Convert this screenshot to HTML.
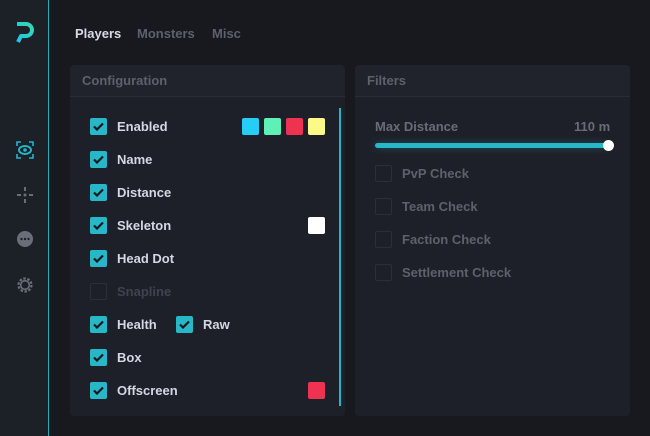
<!DOCTYPE html><html><head><style>
*{margin:0;padding:0;box-sizing:border-box}
body{width:650px;height:436px;background:#17191e;font-family:"Liberation Sans",sans-serif;font-weight:bold;position:relative;overflow:hidden}
.side{position:absolute;left:0;top:0;width:49px;height:436px;background:#1c2027;border-right:1px solid #2aa9bd}
.tab{position:absolute;top:26px;font-size:13px;color:#5d616c}
.panel{position:absolute;top:65px;height:351px;background:#1e2029;border-radius:4px}
.ph{height:32px;border-bottom:1px solid #2a2d36;color:#5d616c;font-size:13px;padding:8px 0 0 12px;background:#20232b;border-radius:4px 4px 0 0}
.row{position:absolute;height:16px;font-size:13px;color:#d4d7e4;line-height:18px}
.cb{position:absolute;left:0;top:0;width:17px;height:17px;border-radius:2px;background:#27b7c8}
.cb svg{position:absolute;left:3px;top:4px}
.cb.off{background:transparent;border:1px solid #2c2f38}
.lbl{position:absolute;left:27px;top:0;white-space:nowrap}
.sw{position:absolute;width:17px;height:17px;border-radius:2px}
</style></head><body>
<div class="side">
<svg style="position:absolute;left:14px;top:21px" width="22" height="24" viewBox="0 0 22 24"><defs><linearGradient id="g" x1="0" y1="1" x2="1" y2="0"><stop offset="0" stop-color="#20c2e8"/><stop offset="1" stop-color="#38d8b0"/></linearGradient></defs><path d="M3 3 H12 A6 6 0 0 1 12 15 H7 L4 21" fill="none" stroke="url(#g)" stroke-width="4" stroke-linejoin="round"/></svg>
<svg style="position:absolute;left:16px;top:141px" width="18" height="18" viewBox="0 0 18 18"><path d="M1 5V1H5M13 1H17V5M17 13V17H13M5 17H1V13" fill="none" stroke="#25b5c8" stroke-width="1.6"/><ellipse cx="9" cy="9" rx="6" ry="4" fill="none" stroke="#25b5c8" stroke-width="2"/><circle cx="9" cy="9" r="1.8" fill="#25b5c8"/></svg>
<svg style="position:absolute;left:16px;top:186px" width="18" height="18" viewBox="0 0 18 18" fill="#6a6e78"><rect x="8" y="1" width="2" height="4"/><rect x="8" y="13" width="2" height="4"/><rect x="1" y="8" width="4" height="2"/><rect x="13" y="8" width="4" height="2"/><circle cx="9" cy="9" r="1.5"/></svg>
<svg style="position:absolute;left:17px;top:231px" width="16" height="16" viewBox="0 0 16 16"><circle cx="8" cy="8" r="8" fill="#6a6e78"/><circle cx="4.5" cy="8" r="1.2" fill="#1c2027"/><circle cx="8" cy="8" r="1.2" fill="#1c2027"/><circle cx="11.5" cy="8" r="1.2" fill="#1c2027"/></svg>
<svg style="position:absolute;left:16px;top:276px" width="18" height="18" viewBox="0 0 18 18"><circle cx="9" cy="9" r="6.5" fill="none" stroke="#6a6e78" stroke-width="2.2" stroke-dasharray="2.5 1.6"/><circle cx="9" cy="9" r="4.3" fill="none" stroke="#6a6e78" stroke-width="1.6"/></svg>
</div>
<div class="tab" style="left:75px;color:#d8dbe6">Players</div>
<div class="tab" style="left:137px">Monsters</div>
<div class="tab" style="left:212px">Misc</div>

<div class="panel" style="left:70px;width:275px"><div class="ph">Configuration</div>
<div style="position:absolute;left:269px;top:43px;width:2px;height:298px;background:#25b5c8"></div>
</div>
<div class="panel" style="left:355px;width:275px"><div class="ph">Filters</div></div>

<div class="sw" style="left:242px;top:118px;background:#24cef5"></div>
<div class="sw" style="left:264px;top:118px;background:#5ff0b8"></div>
<div class="sw" style="left:286px;top:118px;background:#ed3350"></div>
<div class="sw" style="left:308px;top:118px;background:#fdf986"></div>
<div class="sw" style="left:308px;top:217px;background:#ffffff"></div>
<div class="sw" style="left:308px;top:382px;background:#ed3350"></div>

<div class="row" style="left:375px;top:118px;color:#686c77">Max Distance</div>
<div class="row" style="left:574px;top:118px;color:#686c77">110 m</div>
<div style="position:absolute;left:375px;top:143px;width:233px;height:5px;border-radius:3px;background:#27b7c8;box-shadow:0 0 8px rgba(39,183,200,.3)"></div>
<div style="position:absolute;left:603px;top:140px;width:11px;height:11px;border-radius:50%;background:#fff"></div>

<script>
var ck='<svg width="11" height="9" viewBox="0 0 11 9"><path d="M1 4.5L4 7.5L10 1.5" fill="none" stroke="#16181d" stroke-width="2.2"/></svg>';
function r(x,y,t,on,c){c=c||(on?'#d4d7e4':'#3f434d');var s='<div class="row" style="left:'+x+'px;top:'+y+'px"><div class="cb'+(on?'':' off')+'">'+(on?ck:'')+'</div><div class="lbl" style="color:'+c+'">'+t+'</div></div>';document.body.insertAdjacentHTML('beforeend',s);}
var L=[["Enabled",1],["Name",1],["Distance",1],["Skeleton",1],["Head Dot",1],["Snapline",0],["Health",1],["Box",1],["Offscreen",1]];
L.forEach(function(a,i){r(90,118+i*33,a[0],a[1]);});
r(176,316,"Raw",1);
["PvP Check","Team Check","Faction Check","Settlement Check"].forEach(function(t,i){r(375,165+i*33,t,0,'#5d616c');});
</script>
</body></html>
